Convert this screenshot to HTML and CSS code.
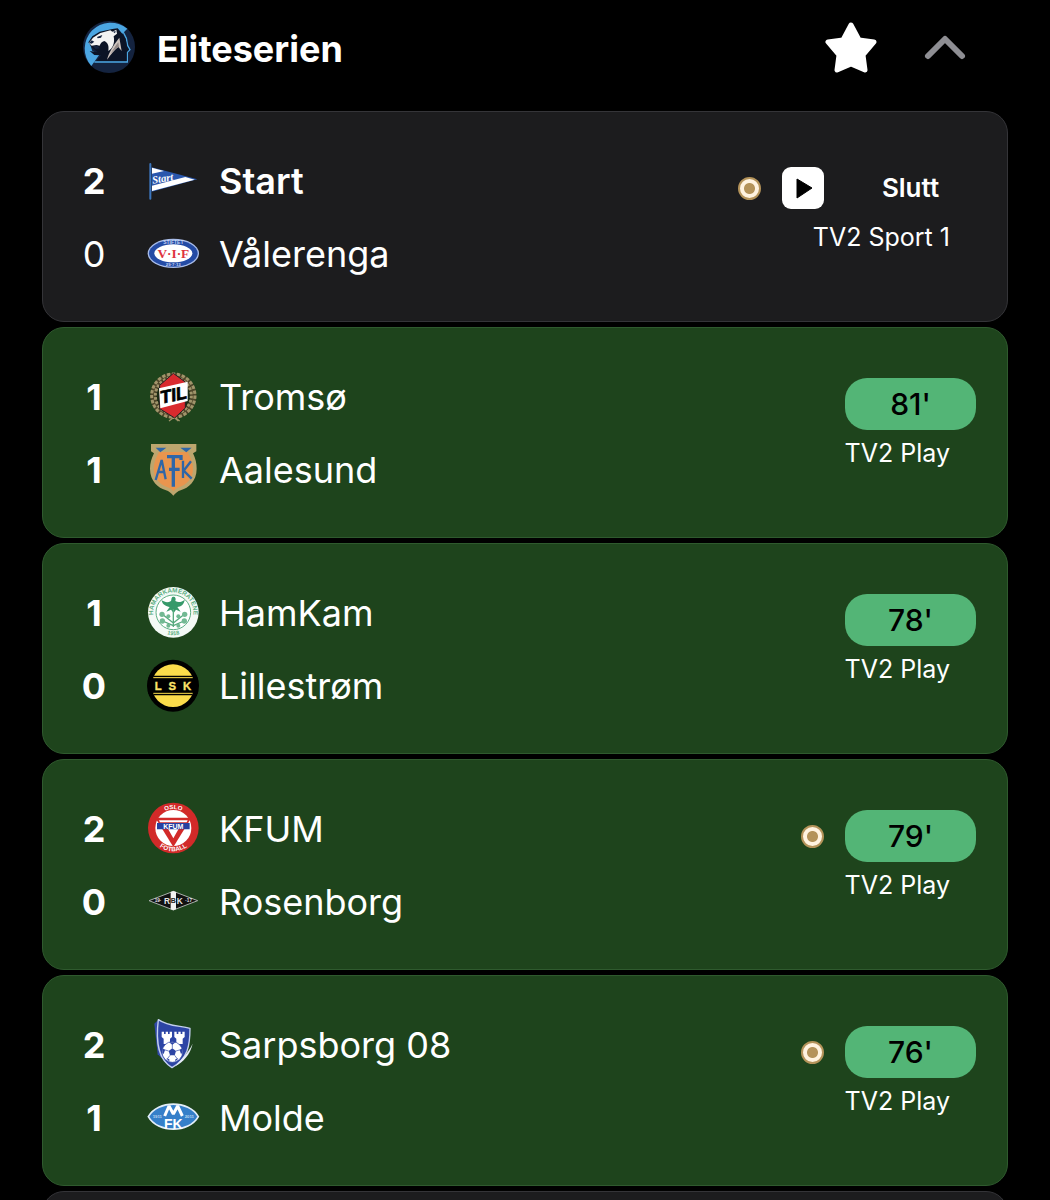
FILE: index.html
```html
<!DOCTYPE html>
<html lang="no">
<head>
    <meta charset="UTF-8">
    <meta name="viewport" content="width=device-width, initial-scale=1.0">
    <title>Eliteserien</title>
    <link rel="stylesheet" href="styles.css">
</head>
<body>
    <main class="league">
        <header class="league-header">
            <svg class="logo" viewBox="0 0 156 156" aria-hidden="true">
                <circle cx="78" cy="78" r="78" fill="#14233f"/>
                <path d="M25 135A78 78 0 0 1 133 23L112 44H60L20 66l8 24 22 10z" fill="#4ba6e2"/>
                <path d="M104 22l18 14 8 16 4 22 7 12-8 8v29H34" fill="none" stroke="#4ba6e2" stroke-width="4"/>
                <path d="M16 64l12-18 22-14 38-8 16-2 14 16 10 16 4 22 6 10-7 8v26H40l14-17-20-1-14-12 24 4-16-14z" fill="#0c1426"/>
                <path d="M18 66L30 50l22-14 30-8 6 4 12-6 2 12-10 8c4 20-2 36-16 44 2-14 0-24-12-30-8 2-12 8-14 14l-10-2-14 2z" fill="#f3f3f3"/>
                <path d="M42 48l16-6-4 8-10 2zM90 32l8-2-2 7z" fill="#14233f"/>
                <path d="M18 66l8-8 8 4-8 6zM30 76l14-2 6 8-12 2z" fill="#14233f"/>
                <path d="M72 116C78 94 90 74 109 50l7 40-10-12c-10 8-22 22-34 38z" fill="#cdc3be"/>
                <path d="M82 100c8-14 16-26 24-36l2 13c-10 4-18 12-26 23z" fill="#938987"/>
            </svg>
            <h1>Eliteserien</h1>
            <button class="icon-button" type="button" aria-label="Favoritt">
                <svg viewBox="0 0 52 52" aria-hidden="true"><path d="M26 4l8 15 15 2-11 13 2 15L26 43 12 49l2-15L3 21l15-2z" fill="#fff" stroke="#fff" stroke-width="5" stroke-linejoin="round"/></svg>
            </button>
            <button class="icon-button" type="button" aria-label="Skjul kamper">
                <svg viewBox="0 0 52 52" aria-hidden="true"><path d="M9 35L26 18l17 17" fill="none" stroke="#8e8e93" stroke-width="6" stroke-linecap="round" stroke-linejoin="round"/></svg>
            </button>
        </header>

        <section class="match">
            <div class="teams">
                <div class="team winner">
                    <span class="score">2</span>
                    <svg class="logo" viewBox="0 0 156 156" aria-hidden="true">
                        <path d="M14 37L151 73 14 110z" fill="#2a57ad"/>
                        <path d="M15 38l36 10-36 8zM15 92l100-26 28 8L15 108z" fill="#fff"/>
                        <path d="M10 27v104" stroke="#3c76bd" stroke-width="6" stroke-linecap="round"/>
                        <text x="17" y="86" transform="rotate(-9 17 86)" class="script" font-size="32">Start</text>
                    </svg>
                    <span class="name">Start</span>
                </div>
                <div class="team">
                    <span class="score">0</span>
                    <svg class="logo" viewBox="0 0 156 156" aria-hidden="true">
                        <ellipse cx="79" cy="76" rx="77" ry="44" fill="#a9bdea"/>
                        <ellipse cx="79" cy="76" rx="73" ry="40" fill="#244ba5"/>
                        <ellipse cx="79" cy="76" rx="57" ry="27" fill="#fff"/>
                        <text x="79" y="90" class="serif" font-size="40" fill="#df3340">V·I·F</text>
                        <text x="79" y="48" class="mark" font-size="15" fill="#c6d5f4">STIFTET</text>
                        <text x="79" y="114" class="mark" font-size="13" fill="#c6d5f4">29·7·13</text>
                    </svg>
                    <span class="name">Vålerenga</span>
                </div>
            </div>
            <div class="info">
                <div class="status-row">
                    <span class="ball"></span>
                    <button class="play" type="button" aria-label="Spill av">
                        <svg viewBox="0 0 42 42" aria-hidden="true"><path d="M15 12v19l15-10z" fill="#000" stroke="#000" stroke-width="1" stroke-linejoin="round"/></svg>
                    </button>
                    <span class="status">Slutt</span>
                </div>
                <span class="channel">TV2 Sport 1</span>
            </div>
        </section>

        <section class="match live">
            <div class="teams">
                <div class="team">
                    <span class="score">1</span>
                    <svg class="logo" viewBox="0 0 156 156" aria-hidden="true">
                        <circle cx="79" cy="74" r="60" fill="#1a2a14" stroke="#4d4529" stroke-width="18"/>
                        <circle cx="79" cy="74" r="65" fill="none" stroke="#a0946a" stroke-width="9" stroke-dasharray="10 5"/>
                        <circle cx="79" cy="74" r="54" fill="none" stroke="#a0946a" stroke-width="9" stroke-dasharray="8 5"/>
                        <path d="M66 150l16-12 16 12M94 150l-14-12" fill="none" stroke="#a0946a" stroke-width="4"/>
                        <path d="M79 7l36 26v78l-32 30-45-28V43z" fill="#d92a2e" stroke="#222" stroke-width="3"/>
                        <path d="M36 52l86-20v58l-82 22z" fill="#fff"/>
                        <text x="79" y="90" transform="rotate(-12 80 72)" class="mark slant" font-size="54" fill="#000" stroke="#000" stroke-width="2">TIL</text>
                    </svg>
                    <span class="name">Tromsø</span>
                </div>
                <div class="team">
                    <span class="score">1</span>
                    <svg class="logo" viewBox="0 0 156 156" aria-hidden="true">
                        <path d="M12 0h136v22l-10 6c8 16 11 30 11 46 0 38-26 58-46 64-12 4-18 10-24 17-6-7-12-13-24-17C35 132 9 112 9 74c0-16 4-30 12-46l-9-6z" fill="#bda66e"/>
                        <path d="M36 24h86c10 18 16 34 16 50 0 32-22 48-40 55-8 3-14 7-19 12-5-5-11-9-19-12-18-7-40-23-40-55 0-16 6-32 16-50z" fill="#e9954e"/>
                        <path d="M26 11h32L40 25zM100 11h34l-16 14z" fill="#2f66a8"/>
                        <g fill="none" stroke="#2f66a8" stroke-width="7">
                            <path d="M26 108l18-60 12 58M34 84h20"/>
                            <path d="M79 128V38M60 38h42v10M66 76h32" stroke-width="10"/>
                            <path d="M108 50v52M132 52l-22 28 24 24"/>
                        </g>
                    </svg>
                    <span class="name">Aalesund</span>
                </div>
            </div>
            <div class="info">
                <div class="status-row">
                    <span class="status">81'</span>
                </div>
                <span class="channel">TV2 Play</span>
            </div>
        </section>

        <section class="match live">
            <div class="teams">
                <div class="team">
                    <span class="score">1</span>
                    <svg class="logo" viewBox="0 0 156 156" aria-hidden="true">
                        <defs>
                            <path id="hamTop" d="M27 106A60 60 0 1 1 131 106"/>
                            <path id="hamBottom" d="M36 129A68 68 0 0 0 122 129"/>
                        </defs>
                        <circle cx="79" cy="76" r="76" fill="#f4faf6"/>
                        <circle cx="79" cy="76" r="52" fill="#fff" stroke="#5cae83" stroke-width="3"/>
                        <text class="ring" font-size="19" fill="#5cae83"><textPath href="#hamTop" startOffset="50%">HAMARKAMERATENE</textPath></text>
                        <text class="ring" font-size="17" fill="#5cae83"><textPath href="#hamBottom" startOffset="50%">1918</textPath></text>
                        <path d="M76 30c8-3 12 3 9 12 10 6 20 2 28-4-2 16-12 20-22 22l10 14-14-6-7 10-8-10-14 6 10-14c-10-2-22-6-24-20 10 6 18 8 28 2 2-4 0-8 4-12z" fill="#36996a"/>
                        <path d="M79 66v54M79 108L46 82M79 108l33-26M79 116l-32-14M79 116l32-14" stroke="#57aa7e" stroke-width="4"/>
                        <g fill="#72b993">
                            <circle cx="45" cy="82" r="8"/><circle cx="113" cy="82" r="8"/>
                            <circle cx="46" cy="102" r="8"/><circle cx="112" cy="102" r="8"/>
                            <circle cx="64" cy="88" r="6"/><circle cx="94" cy="88" r="6"/>
                            <circle cx="64" cy="116" r="6"/><circle cx="94" cy="116" r="6"/>
                        </g>
                    </svg>
                    <span class="name">HamKam</span>
                </div>
                <div class="team">
                    <span class="score">0</span>
                    <svg class="logo" viewBox="0 0 156 156" aria-hidden="true">
                        <circle cx="78" cy="77" r="78" fill="#000"/>
                        <circle cx="78" cy="77" r="64" fill="#fbdc4b"/>
                        <path d="M4 52h148v50H4z" fill="#000"/>
                        <path d="M19 53h118M19 100h118" stroke="#fbdc4b" stroke-width="3"/>
                        <path d="M19 49h118M19 104h118" stroke="#000" stroke-width="4"/>
                        <g class="mark" font-size="34" fill="#fbe36a" stroke="#fbe36a" stroke-width="1">
                            <text x="34" y="89">L</text><text x="76" y="89">S</text><text x="120" y="89">K</text>
                        </g>
                    </svg>
                    <span class="name">Lillestrøm</span>
                </div>
            </div>
            <div class="info">
                <div class="status-row">
                    <span class="status">78'</span>
                </div>
                <span class="channel">TV2 Play</span>
            </div>
        </section>

        <section class="match live">
            <div class="teams">
                <div class="team">
                    <span class="score">2</span>
                    <svg class="logo" viewBox="0 0 156 156" aria-hidden="true">
                        <defs>
                            <path id="kfumTop" d="M22 75A57 57 0 0 1 136 75"/>
                            <path id="kfumBottom" d="M9 75A70 70 0 0 0 149 75"/>
                        </defs>
                        <circle cx="79" cy="75" r="76" fill="#d22a29"/>
                        <circle cx="79" cy="75" r="54" fill="#fff"/>
                        <path d="M25 44h108L79 132z" fill="#d22a29"/>
                        <path d="M36 52h86l-3 6H39zM62 76h34L79 106z" fill="#fff"/>
                        <path d="M30 60h98v19H30z" fill="#2740a0"/>
                        <text x="79" y="77" class="mark" font-size="21" fill="#fff">KFUM</text>
                        <text class="ring" font-size="18" fill="#fff"><textPath href="#kfumTop" startOffset="50%">OSLO</textPath></text>
                        <text class="ring" font-size="19" fill="#fff"><textPath href="#kfumBottom" startOffset="50%">FOTBALL</textPath></text>
                    </svg>
                    <span class="name">KFUM</span>
                </div>
                <div class="team">
                    <span class="score">0</span>
                    <svg class="logo" viewBox="0 0 156 156" aria-hidden="true">
                        <path d="M6 74l73-28 73 28-73 28z" fill="#111" stroke="#aab0ac" stroke-width="3"/>
                        <path d="M71 48l8-3 8 3v52l-8 3-8-3z" fill="#f2f2f2"/>
                        <g class="mark" fill="#e5e8e6">
                            <text x="60" y="83" font-size="25">R</text>
                            <text x="79" y="82" font-size="21" fill="#222">B</text>
                            <text x="98" y="83" font-size="25">K</text>
                            <text x="33" y="79" font-size="14">19·</text>
                            <text x="125" y="79" font-size="14">·17</text>
                        </g>
                    </svg>
                    <span class="name">Rosenborg</span>
                </div>
            </div>
            <div class="info">
                <div class="status-row">
                    <span class="ball"></span>
                    <span class="status">79'</span>
                </div>
                <span class="channel">TV2 Play</span>
            </div>
        </section>

        <section class="match live">
            <div class="teams">
                <div class="team">
                    <span class="score">2</span>
                    <svg class="logo" viewBox="0 0 156 156" aria-hidden="true">
                        <path d="M22 14l10 92 42 42L34 2z" fill="#3048a8"/>
                        <path d="M34 2c28 20 64 18 95 26 0 52-6 90-54 118-40-24-50-72-41-144z" fill="#2d45a5" stroke="#c3cfee" stroke-width="4" stroke-linejoin="round"/>
                        <path d="M137 74c-8 34-28 54-52 68 12-16 34-32 52-68z" fill="#e6ebf7"/>
                        <path d="M44 38h7v7h5v-7h7v7h5v-7h7v16l-6 5v16H50V59l-6-5zM82 38h7v7h5v-7h7v7h5v-7h7v16l-6 5v16H88V59l-6-5z" fill="#fff"/>
                        <circle cx="76" cy="99" r="31" fill="#fff" stroke="#2d45a5" stroke-width="2"/>
                        <path d="M76 88l11 8-4 13H69l-4-13z" fill="#2d45a5"/>
                        <path d="M76 88V74M87 96l14-4M83 109l9 12M69 109l-9 12M65 96l-14-4" stroke="#2d45a5" stroke-width="2"/>
                        <path d="M66 70h20l-10 7zM47 88l7 5-4 12-4-4zM105 88l-7 5 4 12 4-4zM58 118l9 3v7zM94 118l-9 3v7z" fill="#2d45a5"/>
                    </svg>
                    <span class="name">Sarpsborg 08</span>
                </div>
                <div class="team">
                    <span class="score">1</span>
                    <svg class="logo" viewBox="0 0 156 156" aria-hidden="true">
                        <path d="M4 74C32 24 126 24 154 74C126 124 32 124 4 74z" fill="#357fc9" stroke="#e3eef8" stroke-width="5"/>
                        <path d="M53 72L66 42l13 24 13-24 14 30" fill="none" stroke="#fff" stroke-width="9" stroke-linejoin="bevel"/>
                        <text x="79" y="110" class="mark" font-size="42" fill="#fff">FK</text>
                        <text x="31" y="79" class="mark" font-size="13" fill="#bdd8f0">1911</text>
                        <text x="127" y="79" class="mark" font-size="13" fill="#bdd8f0">2011</text>
                    </svg>
                    <span class="name">Molde</span>
                </div>
            </div>
            <div class="info">
                <div class="status-row">
                    <span class="ball"></span>
                    <span class="status">76'</span>
                </div>
                <span class="channel">TV2 Play</span>
            </div>
        </section>

        <section class="match"></section>
    </main>
</body>
</html>
```

FILE: styles.css
```css
* {
    box-sizing: border-box;
}
body {
    margin: 0;
    background-color: #000;
    color: #fff;
    font-family: Inter, "Liberation Sans", sans-serif;
}
.league {
    display: flex;
    flex-direction: column;
    gap: 5px;
    height: 100vh;
    padding: 0 42px;
    overflow: hidden;
}
.league-header {
    display: flex;
    flex-shrink: 0;
    align-items: center;
    height: 106px;
    padding: 0 37px 13px 41px;
}
.league-header h1 {
    flex: 1;
    margin: 0 0 0 22px;
    padding-top: 5px;
    font-size: 36px;
    font-weight: 700;
    line-height: 44px;
}
.logo {
    flex-shrink: 0;
    width: 52px;
    height: 52px;
    overflow: visible;
}
.icon-button {
    width: 52px;
    height: 52px;
    margin-left: 42px;
    padding: 0;
    border: none;
    background: none;
    cursor: pointer;
}
.icon-button svg,
.play svg {
    display: block;
}

/* match cards */
.match {
    display: flex;
    flex-shrink: 0;
    justify-content: space-between;
    min-height: 211px;
    padding: 32px 31px 31px 0;
    border: 1px solid #343438;
    border-radius: 22px;
    background-color: #1c1c1e;
}
.match.live {
    border-color: #2f5a2e;
    background-color: #1e441c;
}
.team {
    display: flex;
    align-items: center;
    height: 73px;
    font-size: 36px;
}
.score {
    width: 104px;
    padding-right: 2px;
    text-align: center;
}
.name {
    margin-left: 20px;
}
.winner {
    font-weight: 600;
}
.winner .score,
.live .score {
    font-weight: 700;
}

/* status column */
.info {
    display: flex;
    flex-direction: column;
    align-items: flex-end;
    padding-top: 18px;
}
.status-row {
    display: flex;
    align-items: center;
    gap: 21px;
    height: 52px;
}
.status {
    width: 131px;
    font-size: 26px;
    font-weight: 600;
    line-height: 52px;
    text-align: center;
}
.live .status {
    border-radius: 22px;
    background-color: #53b576;
    color: #000;
    font-size: 30px;
    font-weight: 500;
}
.channel {
    padding-right: 26px;
    font-size: 25px;
    line-height: 46px;
}
.ball {
    width: 23px;
    height: 23px;
    border: 2px solid #b4935a;
    border-radius: 50%;
    background: radial-gradient(circle, #b4935a 5px, #fff3e0 6px);
}
.play {
    width: 42px;
    height: 42px;
    padding: 0;
    border: none;
    border-radius: 9px;
    background-color: #fff;
    cursor: pointer;
}

/* lettering inside the club logos */
.mark,
.ring {
    font-family: "Liberation Sans", sans-serif;
    font-weight: bold;
    text-anchor: middle;
}
.slant {
    font-style: italic;
}
.serif {
    font-family: "Liberation Serif", serif;
    font-weight: bold;
    text-anchor: middle;
}
.script {
    fill: #fff;
    font-family: "Liberation Serif", serif;
    font-style: italic;
    font-weight: bold;
}
```
